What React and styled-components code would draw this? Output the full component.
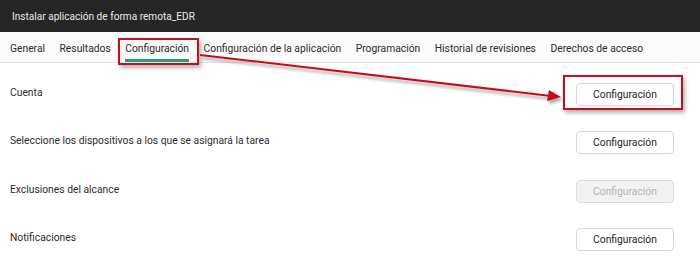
import React from "react";
import styled, { createGlobalStyle } from "styled-components";

const GlobalStyle = createGlobalStyle`
  body {
    margin: 0;
    background: #ffffff;
    font-family: Roboto, "Liberation Sans", Arial, sans-serif;
  }
`;

const Page = styled.div`
  position: relative;
  width: 700px;
  height: 260px;
  overflow: hidden;
  background: #ffffff;
`;

const Header = styled.div`
  height: 32px;
  background: #262626;
  color: #e8e8e8;
  display: flex;
  align-items: center;
  padding: 0 12px;
  font-size: 10.1px;
`;

const TabBar = styled.div`
  height: 30px;
  background: #fafafa;
  border-bottom: 1px solid #e4e4e4;
  display: flex;
  align-items: stretch;
  padding: 0 10px;
  gap: 14.5px;
`;

const Tab = styled.div`
  position: relative;
  display: flex;
  align-items: center;
  white-space: nowrap;
  font-size: 10.3px;
  color: #2b2b2b;
  padding-top: 5px;
  border-bottom: 3px solid ${props => (props.active ? "#1f9e84" : "transparent")};
`;

const Highlight = styled.div`
  position: relative;
  display: flex;
  &::after {
    content: "";
    position: absolute;
    top: ${props => props.top}px;
    bottom: ${props => props.bottom}px;
    left: ${props => props.left}px;
    right: ${props => props.right}px;
    border: 2px solid #c3111b;
    box-shadow: 2px 3px 4px rgba(0, 0, 0, 0.3);
    pointer-events: none;
  }
`;

const List = styled.div`
  display: flex;
  flex-direction: column;
  padding: 20px 26px 0 10px;
`;

const Row = styled.div`
  height: 48.3px;
  display: flex;
  align-items: flex-start;
  justify-content: space-between;
`;

const Label = styled.div`
  font-size: 10.3px;
  color: #2b2b2b;
  padding-top: 3px;
  white-space: nowrap;
`;

const Button = styled.button`
  width: 98px;
  height: 23px;
  border-radius: 4px;
  border: 1px solid ${props => (props.disabled ? "#dcdcdc" : "#d6d6dc")};
  background: ${props => (props.disabled ? "#f2f2f2" : "#ffffff")};
  color: ${props => (props.disabled ? "#b4b4b4" : "#222")};
  font-family: Roboto, "Liberation Sans", Arial, sans-serif;
  font-size: 10.3px;
  padding: 0;
`;

const Overlay = styled.svg`
  position: absolute;
  top: 0;
  left: 0;
  pointer-events: none;
`;

const tabs = [
  "General",
  "Resultados",
  "Configuración",
  "Configuración de la aplicación",
  "Programación",
  "Historial de revisiones",
  "Derechos de acceso"
];

const rows = [
  { label: "Cuenta", highlight: true },
  { label: "Seleccione los dispositivos a los que se asignará la tarea" },
  { label: "Exclusiones del alcance", disabled: true },
  { label: "Notificaciones" }
];

export default function App() {
  return (
    <Page>
      <GlobalStyle />
      <Header>Instalar aplicación de forma remota_EDR</Header>
      <TabBar>
        {tabs.map(t =>
          t === "Configuración" ? (
            <Highlight key={t} top={6} bottom={-3} left={-7} right={-10}>
              <Tab active>{t}</Tab>
            </Highlight>
          ) : (
            <Tab key={t}>{t}</Tab>
          )
        )}
      </TabBar>
      <List>
        {rows.map(r => (
          <Row key={r.label}>
            <Label>{r.label}</Label>
            {r.highlight ? (
              <Highlight top={-8} bottom={-4} left={-13} right={-9}>
                <Button>Configuración</Button>
              </Highlight>
            ) : (
              <Button disabled={r.disabled}>Configuración</Button>
            )}
          </Row>
        ))}
      </List>
      <Overlay width="700" height="260">
        <defs>
          <filter id="sh" x="-10%" y="-50%" width="120%" height="200%">
            <feDropShadow dx="2" dy="3" stdDeviation="1.5" floodOpacity="0.35" />
          </filter>
        </defs>
        <g filter="url(#sh)">
          <line x1="200" y1="55" x2="549" y2="95.7" stroke="#c3111b" strokeWidth="2" />
          <polygon points="561,97 547,101 549,90" fill="#c3111b" />
        </g>
      </Overlay>
    </Page>
  );
}
